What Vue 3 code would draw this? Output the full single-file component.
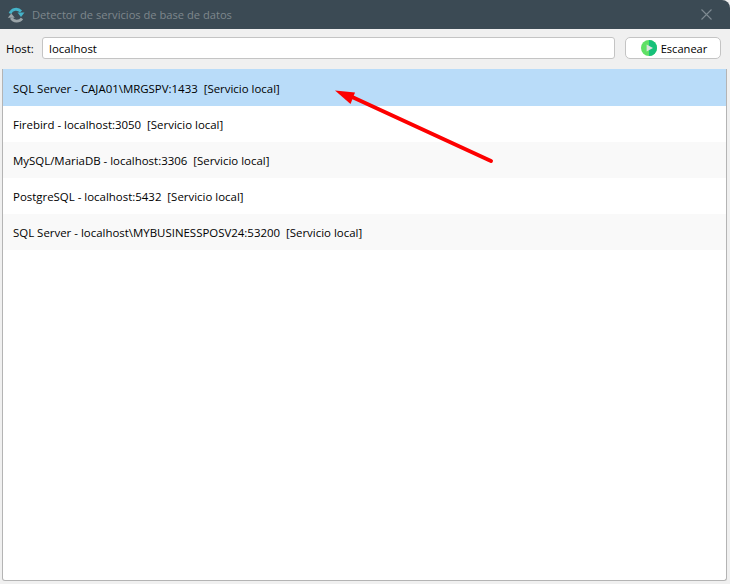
<template>
  <div class="window">
    <header class="titlebar">
      <svg class="app-icon" width="18" height="18" viewBox="0 0 18 18">
        <path d="M3 7.500A6.500 6.500 0 0 1 14 5.500" fill="none" stroke="#45b3c9" stroke-width="2.800" />
        <path d="M10.500 6.500h7l-3.500 4.500z" fill="#45b3c9" />
        <path d="M15 12.500A6.500 6.500 0 0 1 4.200 12" fill="none" stroke="#9aa4a8" stroke-width="2.800" />
        <path d="M.8 11.800h7l-3.500-4.300z" fill="#9aa4a8" />
      </svg>
      <span class="title">Detector de servicios de base de datos</span>
      <svg class="close" width="11" height="11" viewBox="0 0 11 11">
        <path d="M.5.5l10 10M10.500.5l-10 10" stroke="#7f8b92" stroke-width="1.100" fill="none" />
      </svg>
    </header>

    <div class="toolbar">
      <label class="host-label">Host:</label>
      <input class="host-input" v-model="host" />
      <button class="scan-btn">
        <svg width="16" height="16" viewBox="0 0 16 16">
          <circle cx="8" cy="8" r="8" fill="#5fe065" />
          <path d="M8 0a8 8 0 0 1 0 16z" fill="#17c07a" />
          <path d="M5.600 4.400L12 8l-6.400 3.600z" fill="#d9e4dc" />
        </svg>
        <span>Escanear</span>
      </button>
    </div>

    <div class="list">
      <div
        v-for="(item, i) in services"
        :key="item"
        class="row"
        :class="{ selected: i === 0, odd: i % 2 === 0 }"
      >
        <span>{{ item }}&nbsp; [Servicio local]</span>
      </div>
    </div>

    <!-- flecha dibujada encima de la captura -->
    <svg class="arrow" width="730" height="584" viewBox="0 0 730 584">
      <path d="M491 161L350 96" stroke="#fd0000" stroke-width="4" stroke-linecap="round" fill="none" />
      <path d="M335 90.500L355 92.500L350.500 104z" fill="#fd0000" />
    </svg>
  </div>
</template>

<script setup>
import { ref } from 'vue';

const host = ref('localhost');

const services = [
  'SQL Server - CAJA01\\MRGSPV:1433',
  'Firebird - localhost:3050',
  'MySQL/MariaDB - localhost:3306',
  'PostgreSQL - localhost:5432',
  'SQL Server - localhost\\MYBUSINESSPOSV24:53200',
];
</script>

<style>
html,
body {
  margin: 0;
  background: #fff;
}
</style>

<style scoped>
.window {
  position: relative;
  width: 730px;
  height: 584px;
  display: flex;
  flex-direction: column;
  overflow: hidden;
  background: #f0f0f0;
  font-family: "Open Sans", "Noto Sans", sans-serif;
  font-size: 11.45px;
  color: #000;
}

.titlebar {
  height: 29px;
  flex: none;
  display: flex;
  align-items: center;
  padding: 0 10px 0 7px;
  background: #3b4a54;
  border-top-right-radius: 8px;
}

.app-icon {
  flex: none;
}

.title {
  margin-left: 7px;
  color: #7e878c;
  font-size: 11.15px;
}

.close {
  margin-left: auto;
  margin-right: 8px;
}

.toolbar {
  height: 40px;
  flex: none;
  display: flex;
  align-items: center;
  padding: 0 9px 2px 6px;
  box-sizing: border-box;
}

.host-label {
  width: 36px;
  flex: none;
}

.host-input {
  flex: 1;
  min-width: 0;
  height: 22px;
  box-sizing: border-box;
  padding: 0 6px;
  border: 1px solid #c4c4c4;
  border-radius: 3px;
  background: #fff;
  font: inherit;
  color: #000;
  outline: none;
}

.scan-btn {
  width: 96px;
  height: 22px;
  flex: none;
  margin-left: 10px;
  display: flex;
  align-items: center;
  justify-content: center;
  gap: 4px;
  padding: 0 0 0 2px;
  border: 1px solid #c4c4c4;
  border-radius: 5px;
  background: #fff;
  font: inherit;
  font-size: 11.1px;
  color: #000;
}

.list {
  flex: 1;
  margin: 0 3px 3px 2px;
  background: #fff;
  border: solid #b4b4b4;
  border-width: 0 1px 1px 1px;
  border-radius: 0 0 3px 3px;
}

.row {
  height: 36px;
  box-sizing: border-box;
  display: flex;
  align-items: center;
  padding-left: 10px;
  background: #fff;
}

.row.odd {
  background: #f9f9f9;
}

.row.selected {
  height: 37px;
  padding-top: 1px;
  background: #b9dcf9;
}

.arrow {
  position: absolute;
  top: 0;
  left: 0;
  pointer-events: none;
}
</style>
